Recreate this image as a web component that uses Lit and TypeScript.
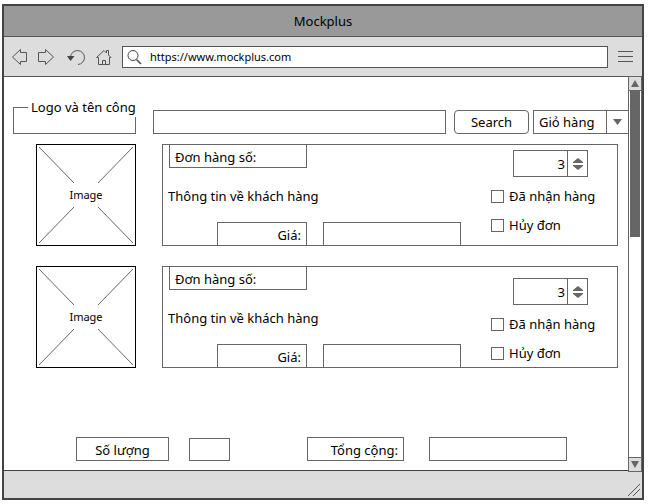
import { LitElement, html, css, svg } from "lit";
import { customElement, property } from "lit/decorators.js";

const controls = css`
  :host {
    font-family: "Noto Sans", "Open Sans", sans-serif;
    font-size: 13px;
    line-height: 18px;
    color: #000;
  }
  *,
  *::before,
  *::after {
    box-sizing: border-box;
  }
  input,
  button,
  select {
    font: inherit;
    color: inherit;
    margin: 0;
    border-radius: 0;
    background: #fff;
    border: 1px solid #666;
    appearance: none;
    min-width: 0;
  }
  svg {
    display: block;
  }
`;

@customElement("order-card")
class OrderCard extends LitElement {
  @property({ type: Number }) quantity = 3;
  @property({ type: Boolean, reflect: true }) low = false;

  static styles = [
    controls,
    css`
      :host {
        display: flex;
        gap: 26px;
        padding: 0 10px 0 32px;
      }
      .picture {
        position: relative;
        flex: none;
        width: 100px;
        height: 102px;
        border: 1px solid #000;
        display: grid;
        place-items: center;
        font-size: 11px;
        line-height: 20px;
      }
      .picture svg {
        position: absolute;
        inset: 0;
      }
      .panel {
        flex: 1;
        min-width: 0;
        border: 1px solid #666;
        display: flex;
        justify-content: space-between;
      }
      .info {
        display: flex;
        flex-direction: column;
        justify-content: space-between;
      }
      .number {
        width: 138px;
        height: 23px;
        margin-left: 6px;
        padding: 3px 5px;
        border: 1px solid #666;
        border-top: 0;
      }
      .customer {
        margin: 0;
        padding: 2px 0 0 5px;
      }
      .price {
        display: flex;
        gap: 16px;
        margin-left: 54px;
      }
      .price label {
        width: 90px;
        height: 23px;
        padding: 3px 5px;
        text-align: right;
        border: 1px solid #666;
        border-bottom: 0;
      }
      .price input {
        width: 138px;
        height: 23px;
        border-bottom: 0;
      }
      .state {
        width: 126px;
        flex: none;
        padding-top: 5px;
      }
      :host([low]) .state {
        padding-top: 11px;
      }
      .stepper {
        display: flex;
        width: 75px;
        height: 27px;
        margin: 0 0 7px 22px;
        border: 1px solid #666;
      }
      .stepper input {
        width: 53px;
        border: 0;
        padding: 0 2px;
        text-align: right;
      }
      .stepper input::-webkit-inner-spin-button {
        appearance: none;
        margin: 0;
      }
      .arrows {
        flex: 1;
        display: flex;
        flex-direction: column;
        align-items: center;
        justify-content: center;
        gap: 2px;
        border-left: 1px solid #666;
      }
      .arrows button {
        border: 0;
        padding: 0;
      }
      .tick {
        display: flex;
        align-items: center;
        gap: 5px;
        height: 24px;
      }
      .tick + .tick {
        margin-top: 5px;
      }
      .tick input {
        width: 13px;
        height: 13px;
        flex: none;
      }
      .tick input:checked {
        background: #666;
        box-shadow: inset 0 0 0 2px #fff;
      }
    `,
  ];

  render() {
    return html`
      <div class="picture">
        <svg width="98" height="100" viewBox="0 0 98 100" fill="none" stroke="#666" aria-hidden="true">
          <path d="M2 2 37 38M96 2 61 38M2 98 37 62M96 98 61 62" />
        </svg>
        <span>Image</span>
      </div>
      <section class="panel">
        <div class="info">
          <div class="number">Đơn hàng số:</div>
          <p class="customer">Thông tin về khách hàng</p>
          <div class="price">
            <label for="price">Giá:</label>
            <input id="price" type="text" />
          </div>
        </div>
        <div class="state">
          <div class="stepper">
            <input type="number" aria-label="Số lượng" .value=${String(this.quantity)} />
            <div class="arrows">
              <button aria-label="+" @click=${() => this.quantity++}>
                <svg width="10" height="5"><path d="M5 0 10 4V5H0V4Z" fill="#666" /></svg>
              </button>
              <button aria-label="-" @click=${() => this.quantity--}>
                <svg width="10" height="5"><path d="M5 5 10 1V0H0V1Z" fill="#666" /></svg>
              </button>
            </div>
          </div>
          <label class="tick"><input type="checkbox" />Đã nhận hàng</label>
          <label class="tick"><input type="checkbox" />Hủy đơn</label>
        </div>
      </section>
    `;
  }
}

const navIcons = [
  { name: "Back", width: 16, shape: svg`<path d="M.5 8 8.5 .5V3.5H14.5V12.5H8.5V15.5Z" />` },
  { name: "Forward", width: 16, shape: svg`<path d="M15.5 8 7.5 .5V3.5H.5V12.5H7.5V15.5Z" />` },
  {
    name: "Reload",
    width: 22,
    shape: svg`<path d="M6.5 8A7 7 0 1 1 14 15.5" /><path d="M3 7H10.500L6.500 12Z" fill="#444" stroke="none" />`,
  },
  {
    name: "Home",
    width: 16,
    shape: svg`<path d="M.5 8.5 8 1.5 10.5 4V1.5H12.5V6L15 8.5H13.5V15.5H2.5V8.5ZM6.5 15.5V11.5H9.5V15.5" />`,
  },
];

@customElement("app-root")
class AppRoot extends LitElement {
  static styles = [
    controls,
    css`
      :host {
        display: flex;
        min-height: 100vh;
        box-sizing: border-box;
        padding: 4px 4px 4px 2px;
        background: #fff;
      }
      .window {
        flex: 1;
        min-width: 0;
        display: flex;
        flex-direction: column;
        border: 2px solid #444;
        background: #ddd;
      }
      .title {
        height: 31px;
        margin: 0;
        font-size: 13px;
        font-weight: 400;
        line-height: 30px;
        text-align: center;
        background: #999;
        border-bottom: 1px solid #555;
      }
      .toolbar {
        display: flex;
        align-items: center;
        height: 40px;
        padding: 0 9px 0 8px;
        border-bottom: 1px solid #555;
      }
      .nav {
        display: flex;
        gap: 10px;
        margin-right: 10px;
      }
      .toolbar button {
        padding: 0;
        border: 0;
        background: none;
      }
      .address {
        flex: 1;
        min-width: 0;
        display: flex;
        align-items: center;
        height: 22px;
        margin-right: 10px;
        padding-left: 4px;
        gap: 8px;
        border: 1px solid #555;
        background: #fff;
      }
      .address input {
        flex: 1;
        height: 18px;
        padding: 0;
        border: 0;
        font-size: 11px;
      }
      .body {
        flex: 1;
        display: flex;
      }
      main {
        flex: 1;
        min-width: 0;
        display: flex;
        flex-direction: column;
        padding-bottom: 9px;
        overflow: hidden;
        background: #fff;
        border-bottom: 1px solid #444;
      }
      .search {
        display: flex;
        align-items: flex-end;
        padding: 20px 0 10px 9px;
      }
      fieldset {
        width: 123px;
        height: 37px;
        margin: 0 17px 0 0;
        padding: 0;
        border: 1px solid #666;
        min-width: 0;
      }
      legend {
        margin-left: 14px;
        padding: 0 0 0 3px;
        line-height: 20px;
        white-space: nowrap;
      }
      .query {
        flex: 1;
        height: 24px;
        margin-right: 8px;
      }
      .go {
        width: 75px;
        height: 24px;
        margin-right: 4px;
        padding: 0;
        border-radius: 4px;
      }
      .cart {
        position: relative;
        width: 95px;
      }
      .cart select {
        display: block;
        width: 100%;
        height: 24px;
        padding: 0 22px 0 5px;
        border-right: 0;
      }
      .cart svg {
        position: absolute;
        top: 0;
        right: 0;
        pointer-events: none;
      }
      .orders {
        display: grid;
        gap: 20px;
      }
      .totals {
        display: flex;
        align-items: flex-end;
        margin-top: auto;
        padding: 20px 61px 0 72px;
      }
      .totals label {
        height: 24px;
        padding: 3px 0;
        border: 1px solid #666;
        text-align: center;
      }
      .totals .count {
        width: 93px;
        margin-right: 20px;
      }
      .totals .sum {
        width: 97px;
        margin: 0 25px 0 auto;
        padding-right: 5px;
        text-align: right;
      }
      .totals input {
        height: 24px;
        width: 138px;
      }
      .totals .short {
        width: 41px;
        height: 23px;
      }
      .scroll {
        flex: none;
        width: 14px;
        margin: -1px 0;
        display: flex;
        flex-direction: column;
        border: 1px solid #666;
        background: #fff;
        position: relative;
      }
      .scroll button {
        height: 13px;
        padding: 0;
        border: 0;
        display: grid;
        place-items: center;
        background: #ddd;
      }
      .track {
        flex: 1;
        padding: 0 1px;
        border: 1px solid #666;
        border-width: 1px 0;
      }
      .thumb {
        height: 40%;
        background: #666;
      }
      footer {
        display: flex;
        justify-content: flex-end;
        align-items: flex-end;
        height: 27px;
        padding: 2px;
      }
    `,
  ];

  render() {
    return html`
      <div class="window">
        <h1 class="title">Mockplus</h1>
        <div class="toolbar">
          <nav class="nav">
            ${navIcons.map(
              (icon) => html`<button aria-label=${icon.name}>
                <svg width=${icon.width} height="16" fill="none" stroke="#555">${icon.shape}</svg>
              </button>`
            )}
          </nav>
          <label class="address">
            <svg width="15" height="16" viewBox="0 0 15 16" fill="none" stroke="#444">
              <circle cx="6" cy="6.500" r="5" />
              <path d="M9.500 10.500 14 15" stroke-width="1.500" />
            </svg>
            <input type="text" aria-label="URL" .value=${"https://www.mockplus.com"} />
          </label>
          <button aria-label="Menu">
            <svg width="15" height="12" stroke="#555"><path d="M0 .5H15M0 5.500H15M0 10.500H15" /></svg>
          </button>
        </div>
        <div class="body">
          <main>
            <form class="search" @submit=${(e: Event) => e.preventDefault()}>
              <fieldset>
                <legend>Logo và tên công</legend>
              </fieldset>
              <input class="query" type="text" aria-label="Search" />
              <button class="go">Search</button>
              <div class="cart">
                <select aria-label="Giỏ hàng">
                  <option>Giỏ hàng</option>
                </select>
                <svg width="22" height="24">
                  <path d="M.5 0V24" stroke="#666" />
                  <path d="M7 9H16L11.500 15Z" fill="#666" />
                </svg>
              </div>
            </form>
            <div class="orders">
              <order-card></order-card>
              <order-card low></order-card>
            </div>
            <div class="totals">
              <label class="count" for="count">Số lượng</label>
              <input class="short" id="count" type="text" />
              <label class="sum" for="sum">Tổng cộng:</label>
              <input id="sum" type="text" />
            </div>
          </main>
          <div class="scroll">
            <button aria-label="Up">
              <svg width="8" height="7"><path d="M4 0 8 7H0Z" fill="#666" /></svg>
            </button>
            <div class="track"><div class="thumb"></div></div>
            <button aria-label="Down">
              <svg width="8" height="7"><path d="M4 7 8 0H0Z" fill="#666" /></svg>
            </button>
          </div>
        </div>
        <footer>
          <svg width="12" height="12" stroke="#555" fill="none"><path d="M0 12 12 0M5 12 12 5" /></svg>
        </footer>
      </div>
    `;
  }
}
